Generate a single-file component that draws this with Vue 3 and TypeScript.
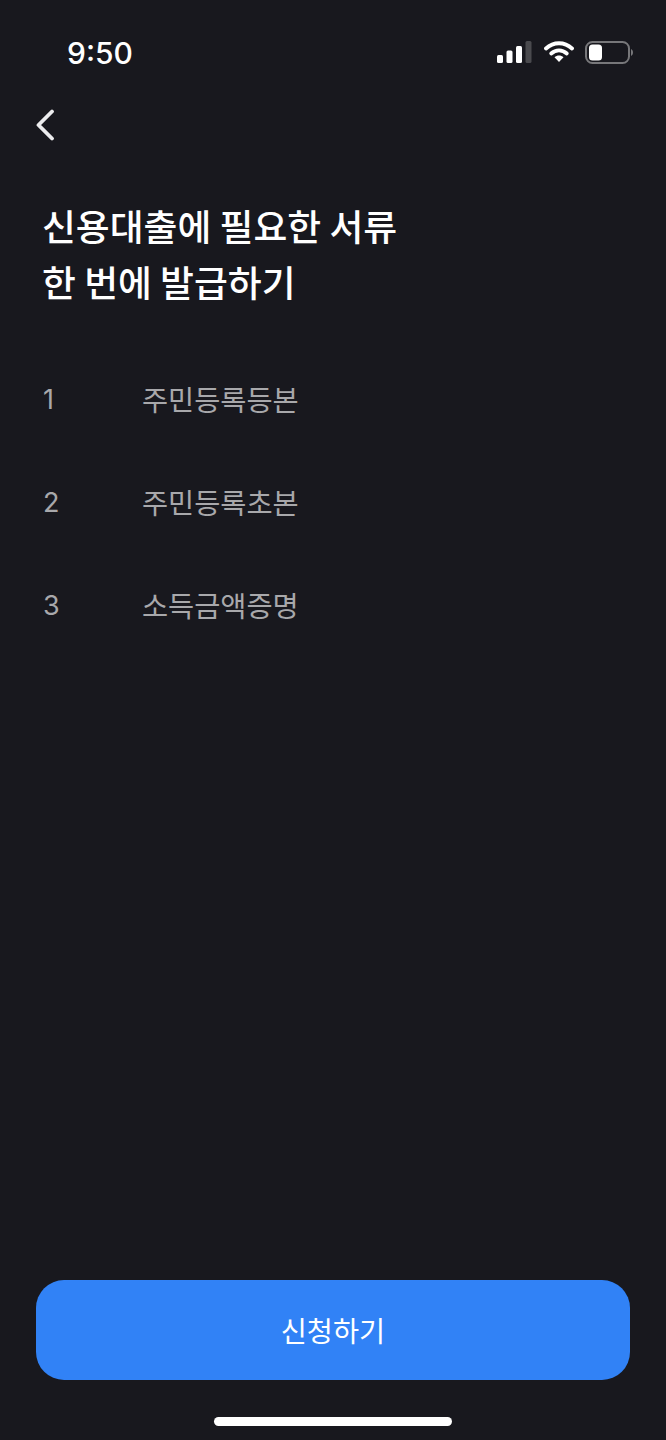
<template>
  <div class="screen">
    <header class="status-bar">
      <span class="time">9:50</span>
      <div class="status-icons">
        <svg width="35" height="22" viewBox="0 0 35 22">
          <rect x="0" y="14" width="6" height="8" rx="1.5" fill="#fff" />
          <rect x="9.500" y="9.500" width="6" height="12.500" rx="1.5" fill="#fff" />
          <rect x="19" y="5" width="6" height="17" rx="1.5" fill="#fff" />
          <rect x="28.500" y="0" width="6" height="22" rx="1.500" fill="#4a4a4e" />
        </svg>
        <svg width="30" height="22" viewBox="0 0 30 22">
          <path d="M2 7.500 C9.500 0.500 20.500 0.500 28 7.500" fill="none" stroke="#fff" stroke-width="3.800" stroke-linecap="round" />
          <path d="M7.200 12.500 C11.800 8.300 18.200 8.300 22.800 12.500" fill="none" stroke="#fff" stroke-width="3.800" stroke-linecap="round" />
          <path d="M10.500 16.300 C13 13.800 17 13.800 19.500 16.300 L15 21 Z" fill="#fff" />
        </svg>
        <svg width="48" height="23" viewBox="0 0 48 23">
          <rect x="1" y="1" width="43" height="21" rx="6.500" fill="none" stroke="#77777a" stroke-width="2" />
          <rect x="4" y="3.500" width="13" height="16" rx="3.500" fill="#fff" />
          <path d="M46 8 C47.500 8.700 48 10 48 11.500 C48 13 47.500 14.300 46 15 Z" fill="#77777a" />
        </svg>
      </div>
    </header>

    <nav class="nav">
      <svg width="20" height="32" viewBox="0 0 20 32">
        <path d="M17 2.500 L3.500 16 L17 29.500" fill="none" stroke="#ececee" stroke-width="3.800" stroke-linecap="round" stroke-linejoin="round" />
      </svg>
    </nav>

    <h1 class="title">신용대출에 필요한 서류<br />한 번에 발급하기</h1>

    <ol class="doc-list">
      <li v-for="(doc, i) in docs" :key="doc" class="doc-row">
        <span class="doc-num">{{ i + 1 }}</span>
        <span class="doc-name">{{ doc }}</span>
      </li>
    </ol>

    <footer class="footer">
      <button class="apply-btn" type="button">신청하기</button>
      <div class="home-bar"></div>
    </footer>
  </div>
</template>

<script setup lang="ts">
const docs: string[] = ['주민등록등본', '주민등록초본', '소득금액증명']
</script>

<style>
html,
body {
  margin: 0;
  background: #18181e;
}
</style>

<style scoped>
.screen {
  width: 666px;
  height: 1440px;
  display: flex;
  flex-direction: column;
  background: #18181e;
  font-family: "Noto Sans CJK KR", "Noto Sans", sans-serif;
  overflow: hidden;
}

.status-bar {
  height: 104px;
  box-sizing: border-box;
  padding: 33px 33px 0 67px;
  display: flex;
  justify-content: space-between;
  align-items: flex-start;
}

.time {
  font-family: Inter, "Noto Sans", sans-serif;
  font-size: 30px;
  line-height: 40px;
  font-weight: 500;
  color: #fff;
}

.status-icons {
  display: flex;
  align-items: center;
  gap: 11.500px;
  height: 38px;
}

.nav {
  height: 42px;
  padding-left: 35px;
  display: flex;
  align-items: center;
}

.title {
  margin: 51px 0 0 42px;
  font-size: 36.8px;
  line-height: 56px;
  font-weight: 500;
  color: #fff;
}

.doc-list {
  list-style: none;
  margin: 69px 0 0;
  padding: 0 0 0 43px;
  display: flex;
  flex-direction: column;
  gap: 63px;
}

.doc-row {
  display: flex;
  height: 40px;
  align-items: center;
  color: #a8a8ab;
}

.doc-num {
  width: 99px;
  padding-top: 2px;
  font-family: Inter, "Noto Sans", sans-serif;
  font-size: 27px;
}

.doc-name {
  font-size: 28.4px;
}

.footer {
  margin-top: auto;
  padding: 0 36px 14px;
  display: flex;
  flex-direction: column;
  align-items: center;
}

.apply-btn {
  width: 100%;
  height: 100px;
  padding-bottom: 2px;
  border: 0;
  border-radius: 28px;
  background: #3182f6;
  color: #fff;
  font-family: inherit;
  font-size: 28.4px;
  font-weight: 400;
}

.home-bar {
  margin-top: 37px;
  width: 238px;
  height: 9px;
  border-radius: 5px;
  background: #fff;
}
</style>
